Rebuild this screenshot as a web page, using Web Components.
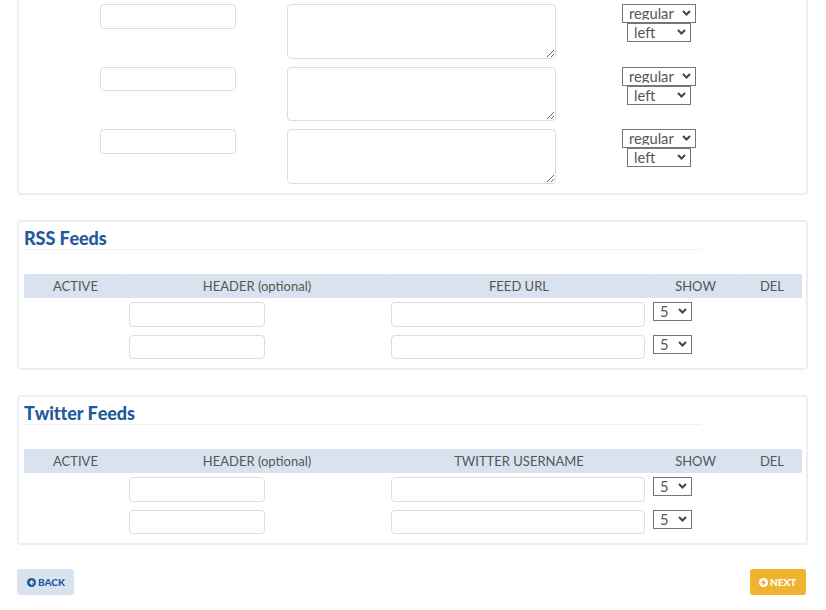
<!DOCTYPE html>
<html>
<head>
<meta charset="utf-8">
<style>
html, body { margin: 0; height: 610px; overflow: hidden; background: #fff; }
body { font-family: Lato, "Open Sans", sans-serif; color: #555; }
</style>
</head>
<body>
<page-shell>
  <form-card notop>
    <column-row></column-row>
    <column-row></column-row>
    <column-row></column-row>
  </form-card>
  <feed-card heading="RSS Feeds" column="FEED URL"></feed-card>
  <feed-card heading="Twitter Feeds" column="TWITTER USERNAME"></feed-card>
  <nav-buttons></nav-buttons>
</page-shell>

<script>
// chevron for the selects, svg only
const chevron = "url(\"data:image/svg+xml,%3Csvg xmlns='http://www.w3.org/2000/svg' width='9' height='6'%3E%3Cpath d='M1 1l3.5 3.5L8 1' fill='none' stroke='%23444' stroke-width='2'/%3E%3C/svg%3E\")";

const fieldCss = `
  input, textarea { box-sizing: border-box; display: block; margin: 0; background: #fff;
    border: 1px solid #ddd; border-radius: 4px; font: 14px Lato, sans-serif; color: #555; outline: none; }
  select { appearance: none; -webkit-appearance: none; box-sizing: border-box; display: block; margin: 0; height: 19px;
    padding: 0 0 2px 6px; background: #fff ${chevron} no-repeat right 4px top 5px;
    border: 1px solid #767676; border-radius: 0; font: 14.7px/16px Lato, sans-serif; color: #555; }
`;

class PageShell extends HTMLElement {
    constructor(){
        super();
        this.attachShadow({mode: 'open'});
        this.shadowRoot.innerHTML = `<style>
            :host { display: flex; flex-direction: column; gap: 25px; padding: 0 18px 0 17px; }
            </style><slot></slot>`;
    }
}

class FormCard extends HTMLElement {
    constructor(){
        super();
        this.attachShadow({mode: 'open'});
        this.shadowRoot.innerHTML = `<style>
            :host { display: flex; flex-direction: column; gap: 8px; box-sizing: border-box; height: 195px;
                padding: 4px 5px 0; border: 2px solid #ebeff5; border-top: 0; border-radius: 0 0 4px 4px; }
            </style><slot></slot>`;
    }
}

class ColumnRow extends HTMLElement {
    constructor(){
        super();
        this.attachShadow({mode: 'open'});
        this.shadowRoot.innerHTML = `<style>
            ${fieldCss}
            :host { display: grid; grid-template-columns: 76px 136px 51px 269px 66px 74px; height: 54.5px; }
            input { grid-column: 2; width: 136px; height: 24.5px; }
            textarea { grid-column: 4; width: 269px; height: 54.5px; resize: vertical; }
            .styles { grid-column: 6; display: flex; flex-direction: column; align-items: center; }
            .weight { width: 74px; }
            .align { width: 64px; }
            </style>
            <input type="text">
            <textarea></textarea>
            <div class="styles">
                <select class="weight"><option>regular</option><option>bold</option></select>
                <select class="align"><option>left</option><option>center</option><option>right</option></select>
            </div>`;
    }
}

class FeedRow extends HTMLElement {
    constructor(){
        super();
        this.attachShadow({mode: 'open'});
        this.shadowRoot.innerHTML = `<style>
            ${fieldCss}
            :host { display: grid; grid-template-columns: 105px 136px 126px 254px 8px 39px; height: 24.5px; }
            input { height: 24.5px; width: 100%; }
            .header { grid-column: 2; }
            .url { grid-column: 4; }
            select { grid-column: 6; width: 39px; }
            </style>
            <input class="header" type="text">
            <input class="url" type="text">
            <select><option>5</option><option>10</option><option>15</option></select>`;
    }
}

class FeedCard extends HTMLElement {
    constructor(){
        super();
        this.attachShadow({mode: 'open'});
        this.shadowRoot.innerHTML = `<style>
            :host { display: block; box-sizing: border-box; height: 150px; padding: 0 5px;
                border: 2px solid #ebeff5; border-radius: 4px; }
            h2 { box-sizing: border-box; width: 677px; height: 28px; margin: 0; padding-top: 6px;
                font: 900 18px/20px Lato, sans-serif; font-kerning: none; letter-spacing: -0.1px; color: #1f5a9a; border-bottom: 1px solid #f0f2f5; }
            .head { display: grid; grid-template-columns: 101px 262px 262px 91px 62px; height: 24px; margin-top: 24px;
                font-size: 13px; line-height: 24px; text-align: center; color: #555; }
            .head span { background: #d9e3f0; border-radius: 1px; padding-left: 2px; }
            .rows { display: flex; flex-direction: column; gap: 8px; margin-top: 4px; }
            </style>
            <h2></h2>
            <div class="head">
                <span>ACTIVE</span><span>HEADER (optional)</span><span class="col"></span><span>SHOW</span><span>DEL</span>
            </div>
            <div class="rows"><feed-row></feed-row><feed-row></feed-row></div>`;
        this.shadowRoot.querySelector('h2').innerText = this.getAttribute('heading');
        this.shadowRoot.querySelector('.col').innerText = this.getAttribute('column');
    }
}

class ActionButton extends HTMLElement {
    constructor(){
        super();
        this.attachShadow({mode: 'open'});
        const back = this.getAttribute('kind') === 'back';
        const arrow = back ? 'M7.2 3 4.2 6 7.2 9M4.6 6H9.4' : 'M4.8 3 7.8 6 4.8 9M7.4 6H2.6';
        this.shadowRoot.innerHTML = `<style>
            :host { display: inline-flex; align-items: center; gap: 2px; box-sizing: border-box; width: ${back ? 57 : 56}px; height: 26px;
                padding-left: ${back ? 10 : 9}px; border-radius: 3px; font: 900 10px/1 Lato, sans-serif;
                background: ${back ? '#d9e3f0' : '#f0b32f'}; color: ${back ? '#1f5a9a' : '#fff'}; }
            svg { width: 9px; height: 9px; display: block; }
            </style>
            <svg viewBox="0 0 12 12"><circle cx="6" cy="6" r="6" fill="currentColor"/>
                <path d="${arrow}" fill="none" stroke="${back ? '#d9e3f0' : '#f0b32f'}" stroke-width="2"/></svg>
            <slot></slot>`;
    }
}

class NavButtons extends HTMLElement {
    constructor(){
        super();
        this.attachShadow({mode: 'open'});
        this.shadowRoot.innerHTML = `<style>
            :host { display: flex; justify-content: space-between; margin-top: -1px; padding-right: 2px; }
            </style>
            <action-button kind="back">BACK</action-button>
            <action-button kind="next">NEXT</action-button>`;
    }
}

window.customElements.define("page-shell", PageShell);
window.customElements.define("form-card", FormCard);
window.customElements.define("column-row", ColumnRow);
window.customElements.define("feed-row", FeedRow);
window.customElements.define("feed-card", FeedCard);
window.customElements.define("action-button", ActionButton);
window.customElements.define("nav-buttons", NavButtons);
</script>
</body>
</html>
